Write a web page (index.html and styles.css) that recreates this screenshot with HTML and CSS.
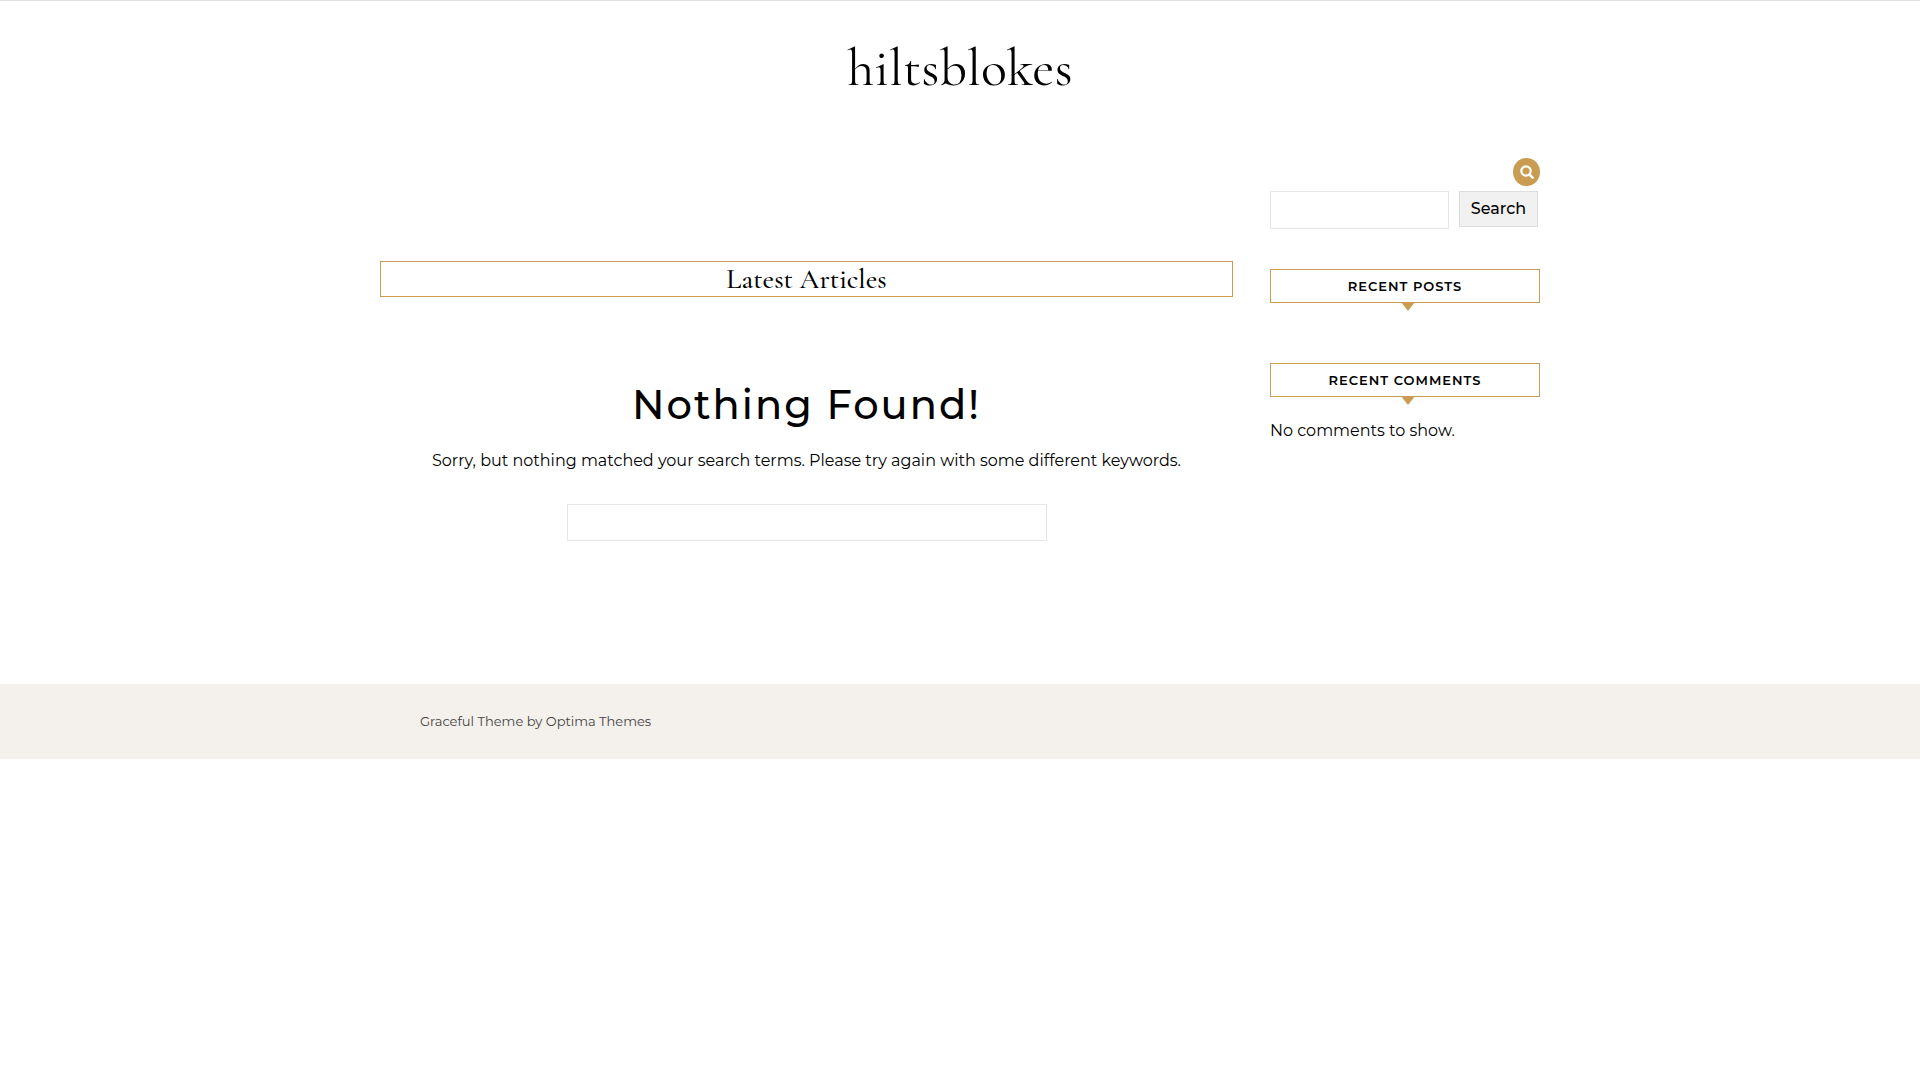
FILE: index.html
```html
<!DOCTYPE html>
<html lang="en">
<head>
<meta charset="utf-8">
<meta name="viewport" content="width=device-width, initial-scale=1">
<title>hiltsblokes</title>
<link rel="stylesheet" href="styles.css">
</head>
<body>
<header class="site-header">
  <a class="site-title" href="#">hiltsblokes</a>
</header>
<div class="container layout">
  <main class="content">
    <h2 class="section-title">Latest Articles</h2>
    <section class="no-results">
      <h1 class="no-results-title">Nothing Found!</h1>
      <p class="no-results-text">Sorry, but nothing matched your search terms. Please try again with some different keywords.</p>
      <form role="search">
        <input class="field field-wide" type="search" aria-label="Search for">
      </form>
    </section>
  </main>
  <aside class="sidebar">
    <button class="search-toggle" type="button" aria-label="Open search">
      <svg width="14" height="14" viewBox="0 0 14 14" fill="none" stroke="currentColor" stroke-width="2.2" aria-hidden="true"><circle cx="6" cy="6" r="4.7"/><path d="M9.4 9.4l3.2 3.2" stroke-width="2.6" stroke-linecap="round"/></svg>
    </button>
    <form class="search-form" role="search">
      <input class="field" type="search" aria-label="Search">
      <button class="search-button" type="submit">Search</button>
    </form>
    <h2 class="widget-title">Recent Posts</h2>
    <h2 class="widget-title">Recent Comments</h2>
    <p class="widget-text">No comments to show.</p>
  </aside>
</div>
<footer class="site-footer">
  <div class="container credit"><a href="#">Graceful Theme by Optima Themes</a></div>
</footer>
</body>
</html>
```
FILE: styles.css
```css
* {
  box-sizing: border-box;
}

body {
  margin: 0;
  background: #fff;
  color: #010101;
  font-family: Montserrat, Inter, sans-serif;
  font-size: 16px;
  line-height: 26px;
}

h1, h2, p {
  margin: 0;
}

a {
  color: inherit;
  text-decoration: none;
}

.container {
  max-width: 1160px;
  margin: 0 auto;
}

.site-header {
  padding: 35px 0 57px;
  border-top: 1px solid #e0e0e0;
  text-align: center;
}

.site-title {
  display: block;
  font-family: "Cormorant Garamond", "Liberation Serif", serif;
  font-size: 54px;
  line-height: 64px;
}

.layout {
  display: grid;
  grid-template-columns: minmax(0, 1fr) 270px;
  gap: 37px;
  padding-bottom: 143px;
}

.content {
  padding-top: 104px;
  text-align: center;
}

.section-title {
  border: 1px solid #c99c51;
  font-family: "Cormorant Garamond", "Liberation Serif", serif;
  font-size: 28px;
  font-weight: 500;
  line-height: 34px;
}

.no-results {
  padding-top: 82px;
}

.no-results-title {
  font-size: 40px;
  font-weight: 500;
  line-height: 52px;
  letter-spacing: 2px;
}

.no-results-text {
  margin: 17px 0 30px;
}

.field {
  width: 100%;
  min-width: 0;
  height: 38px;
  padding: 0 10px;
  border: 1px solid #e6e6e6;
  background: #fff;
  font: inherit;
}

.field-wide {
  display: block;
  max-width: 480px;
  height: 37px;
  margin: 0 auto;
}

.sidebar {
  display: flex;
  flex-direction: column;
  padding-top: 1px;
}

.search-toggle {
  display: grid;
  place-items: center;
  align-self: flex-end;
  width: 27px;
  height: 28px;
  margin-bottom: 5px;
  padding: 0;
  border: 0;
  border-radius: 50%;
  background: #c99c51;
  color: #fff;
}

.search-form {
  display: flex;
  align-items: flex-start;
  gap: 10px;
  margin-bottom: 40px;
  padding-right: 2px;
}

.search-button {
  flex: none;
  width: 79px;
  padding: 4px 0;
  border: 1px solid #ddd;
  background: #f1f1f1;
  color: #010101;
  font: inherit;
  font-weight: 500;
}

.widget-title {
  position: relative;
  margin-bottom: 60px;
  border: 1px solid #c99c51;
  font-size: 13px;
  font-weight: 600;
  line-height: 32px;
  letter-spacing: 1px;
  text-align: center;
  text-transform: uppercase;
}

.widget-title::after {
  content: "";
  position: absolute;
  top: 100%;
  left: 50%;
  width: 14px;
  height: 9px;
  margin-left: -4px;
  background: #c99c51;
  clip-path: polygon(0 0, 100% 0, 50% 100%);
}

.widget-title:last-of-type {
  margin-bottom: 21px;
}

.site-footer {
  padding: 24px 0 25px;
  background: #f4f0eb;
  color: #444;
  font-size: 13px;
}

.credit {
  padding: 0 40px;
}
```
